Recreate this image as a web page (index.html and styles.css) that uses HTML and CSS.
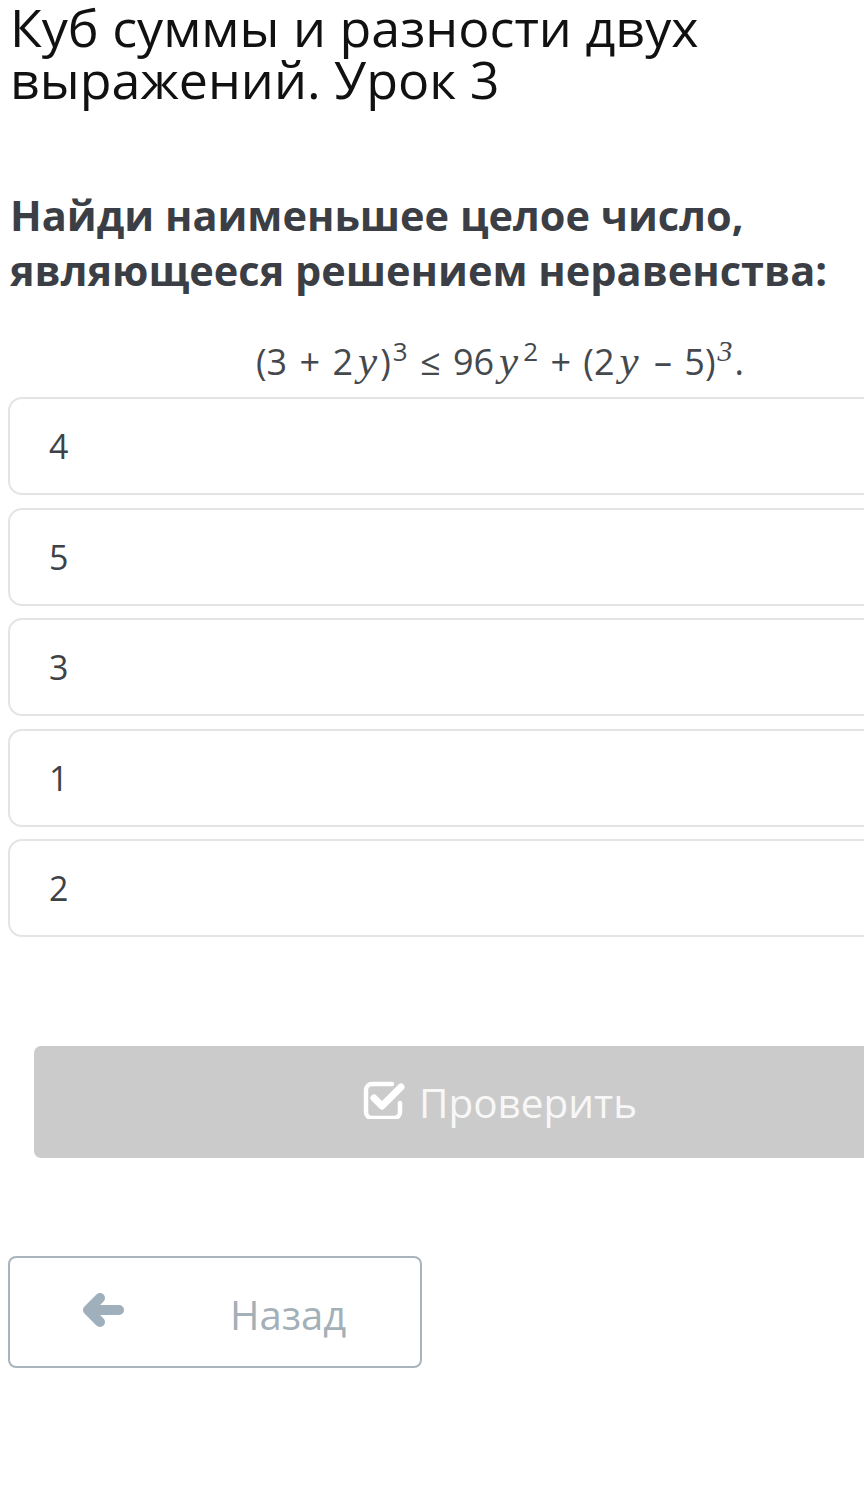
FILE: index.html
```html
<!DOCTYPE html>
<html lang="ru">
<head>
  <meta charset="UTF-8" />
  <meta name="viewport" content="width=device-width, initial-scale=1.0"/>
  <title>Куб суммы и разности двух выражений. Урок 3</title>
  <link rel="stylesheet" href="styles.css">
</head>

<body>

  <div class="page">
    <h1 class="lesson-title">Куб суммы и разности двух выражений. Урок 3</h1>

    <div class="task">
      <h2 class="question">Найди наименьшее целое число, являющееся решением неравенства:</h2>

      <!-- formula -->
      <p class="formula">(3 + 2<i class="mv">y</i>)<sup>3</sup> ≤ 96<i class="mv">y</i><sup>2</sup> + (2<i class="mv">y</i> – 5)<sup class="it">3</sup>.</p>

      <ul class="answers">
        <li class="answer">4</li>
        <li class="answer">5</li>
        <li class="answer">3</li>
        <li class="answer">1</li>
        <li class="answer">2</li>
      </ul>

      <button class="check-btn" type="button" disabled>
        <svg class="check-icon" viewBox="0 0 44 40" width="44" height="40">
          <path d="M29 5 H9 a6 6 0 0 0 -6 6 v22 a6 6 0 0 0 6 6 h22 a6 6 0 0 0 6 -6 v-9" fill="none" stroke="#fff" stroke-width="4.5" stroke-linecap="round"/>
          <path d="M11 19 l8 8 l19 -19" fill="none" stroke="#fff" stroke-width="7" stroke-linecap="round" stroke-linejoin="round"/>
        </svg>
        Проверить
      </button>
    </div>

    <div class="nav-row">
      <a class="back-btn" href="#">
        <svg class="back-icon" viewBox="0 0 44 36" width="44" height="36">
          <path d="M18 6 L6 18 L18 30 M8 18 H37" fill="none" stroke="#9fb0bc" stroke-width="10" stroke-linecap="round" stroke-linejoin="round"/>
        </svg>
        <span>Назад</span>
      </a>
    </div>
  </div>

</body>
</html>
```

FILE: styles.css
```css
html, body {
  overflow-x: hidden;
}

body {
  margin: 0;
  padding: 0;
  background: #fff;
  font-family: 'Open Sans', 'Noto Sans', sans-serif;
  color: #3c4046;
}

.page {
  width: 984px;
  padding: 0 0 0 8px;
}

.lesson-title {
  margin: 0 0 0 2px;
  padding-top: 1px;
  font-size: 52px;
  font-weight: 400;
  line-height: 52px;
  color: #111;
}

.question {
  margin: 83px 0 0 2px;
  font-size: 41.5px;
  font-weight: 700;
  line-height: 55px;
  color: #3b3f45;
}

.formula {
  margin: 39px 0 11px;
  text-align: center;
  font-size: 36px;
  line-height: 48px;
  word-spacing: 3px;
  color: #45494e;
}

.formula sup {
  font-size: 26px;
  line-height: 0;
  vertical-align: 14px;
  margin-left: 2px;
}

.formula .mv,
.formula .it {
  font-family: 'Liberation Serif', 'DejaVu Serif', serif;
  font-style: italic;
  font-size: 43px;
}

.formula .mv {
  margin: 0 3px 0 5px;
}

.formula sup.it {
  font-size: 30px;
  margin-right: 2px;
}

.answers {
  list-style: none;
  margin: 0;
  padding: 0;
  display: flex;
  flex-direction: column;
  gap: 12.5px;
}

.answer {
  height: 94px;
  display: flex;
  align-items: center;
  padding-left: 39px;
  border: 2px solid #e2e4e6;
  border-radius: 14px;
  font-size: 34px;
  color: #3d4247;
}

.check-btn {
  display: flex;
  align-items: center;
  justify-content: center;
  gap: 12px;
  width: 932px;
  height: 112px;
  margin: 109px 0 0 26px;
  border: none;
  border-radius: 7px;
  background-color: #cbcbcb;
  color: #f7f7f7;
  font-family: inherit;
  font-size: 40.5px;
}

.check-icon {
  margin-top: -6px;
}

.nav-row {
  margin-top: 98px;
}

.back-btn {
  display: flex;
  align-items: center;
  box-sizing: border-box;
  width: 414px;
  height: 112px;
  padding-left: 72px;
  border: 2px solid #a9b5bc;
  border-radius: 8px;
  text-decoration: none;
  color: #a3b0b8;
  font-size: 40px;
}

.back-icon {
  margin-top: -4px;
}

.back-btn span {
  margin-left: 104px;
  margin-top: 4px;
}
```
